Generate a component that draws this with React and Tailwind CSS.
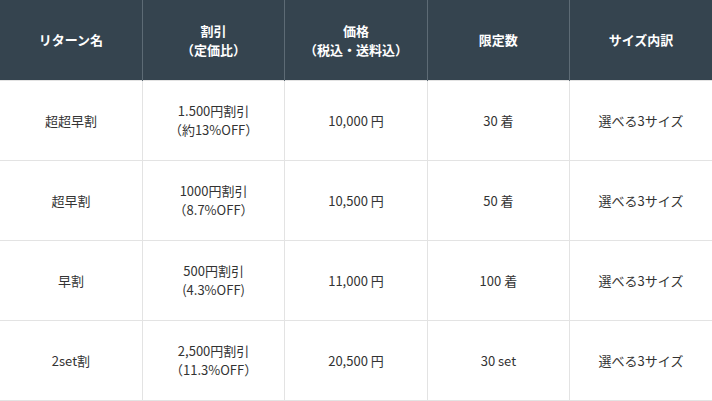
const HEAD = [
    ['リターン名'],
    ['割引', '（定価比）'],
    ['価格', '（税込・送料込）'],
    ['限定数'],
    ['サイズ内訳'],
];

const ROWS = [
    ['超超早割', ['1.500円割引', '（約13%OFF）'], '10,000 円', '30 着', '選べる3サイズ'],
    ['超早割', ['1000円割引', '（8.7%OFF）'], '10,500 円', '50 着', '選べる3サイズ'],
    ['早割', ['500円割引', '(4.3%OFF)'], '11,000 円', '100 着', '選べる3サイズ'],
    ['2set割', ['2,500円割引', '（11.3%OFF）'], '20,500 円', '30 set', '選べる3サイズ'],
];

export default function App() {
    return (
        <div className="h-[401px] w-[712px] overflow-hidden bg-white" style={{ fontFamily: '"Noto Sans CJK JP", "Noto Sans", sans-serif' }}>
            <table className="w-[712px] table-fixed border-collapse text-center text-[13px] leading-[19px]">
                <thead>
                    <tr className="h-[80px] bg-[#35444f]">
                        {HEAD.map((h, i) => (
                            <th key={i} className="border-x border-[#5d6b75] font-bold text-white first:border-l-0 last:border-r-0">
                                {h.map((line) => <div key={line}>{line}</div>)}
                            </th>
                        ))}
                    </tr>
                </thead>
                <tbody>
                    {ROWS.map((row) => (
                        <tr key={row[0]} className="h-[80px] text-[#333]">
                            {row.map((cell, i) => (
                                <td key={i} className="border border-[#e3e3e3] first:border-l-0 last:border-r-0">
                                    {Array.isArray(cell) ? cell.map((line) => <div key={line}>{line}</div>) : cell}
                                </td>
                            ))}
                        </tr>
                    ))}
                </tbody>
            </table>
        </div>
    );
}
